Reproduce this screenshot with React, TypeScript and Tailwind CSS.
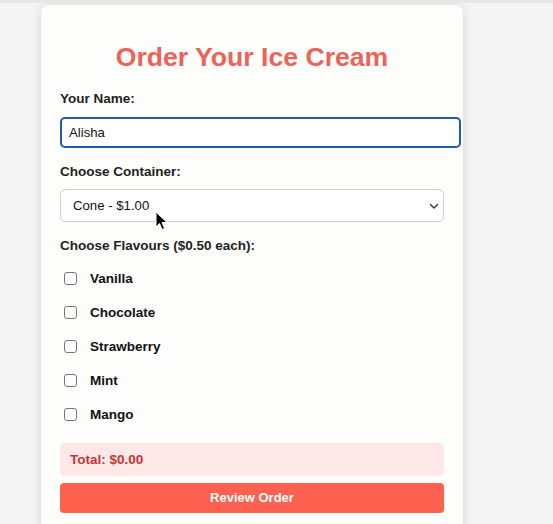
import React from "react";

const flavours = ["Vanilla", "Chocolate", "Strawberry", "Mint", "Mango"];

export default function App() {
  return (
    <div
      className="relative min-h-[524px] h-[524px] overflow-hidden bg-[#f4f4f4] border-t-[3px] border-[#e7e7e7]"
      style={{ fontFamily: '"Liberation Sans", Arial, sans-serif' }}
    >
      <div className="ml-[41px] mt-[2px] w-[422px] h-[560px] rounded-[8px] bg-[#fdfdfc] shadow-[0_0_10px_rgba(0,0,0,0.12)] px-[19px] pt-[19px]">
        <h1 className="mt-[18px] mb-[18px] text-center text-[26.6px] leading-[31px] font-bold text-[#ec6359]">
          Order Your Ice Cream
        </h1>
        <label className="block text-[13.5px] leading-[15px] font-bold text-[#1f1f1f] mb-[11px]">
          Your Name:
        </label>
        <div className="w-[401px] h-[31px] rounded-[5px] border-2 border-[#1f5bb5] bg-white flex items-center pl-[7px] text-[13.2px] text-[#111]">
          Alisha
        </div>
        <label className="block mt-[16px] text-[13.5px] leading-[15px] font-bold text-[#1f1f1f] mb-[10px]">
          Choose Container:
        </label>
        <div className="relative w-[384px] h-[33px] rounded-[5px] border border-[#cfcfcf] bg-white flex items-center pl-[12px] text-[13.2px] text-[#111]">
          Cone - $1.00
          <svg className="absolute right-[4px] top-[12px]" width="10" height="8" viewBox="0 0 10 8">
            <path d="M1.5 2.5 L5 6 L8.5 2.5" fill="none" stroke="#333" strokeWidth="1.4" strokeLinecap="round" strokeLinejoin="round" />
          </svg>
        </div>
        <label className="block mt-[16px] text-[13.5px] leading-[15px] font-bold text-[#1f1f1f] mb-[9px]">
          Choose Flavours ($0.50 each):
        </label>
        <div className="flex flex-col">
          {flavours.map((f) => (
            <div key={f} className="h-[34px] flex items-center">
              <span className="ml-[4px] w-[13px] h-[13px] rounded-[3px] border border-[#767676] bg-white -mt-[2px]" />
              <span className="ml-[13px] text-[13.5px] font-bold text-[#111]">{f}</span>
            </div>
          ))}
        </div>
        <div className="mt-[11px] h-[33px] w-[384px] rounded-[5px] bg-[#fde8e8] flex items-center pl-[10px] pt-[1px] text-[13.5px] font-bold text-[#c33536]">
          Total: $0.00
        </div>
        <div className="mt-[7px] h-[30px] w-[384px] rounded-[4px] bg-[#ff6151] flex items-center justify-center text-[13px] font-bold text-white">
          Review Order
        </div>
      </div>
      <svg className="absolute left-[155px] top-[208px]" width="13" height="20" viewBox="0 0 13 20">
        <path d="M1 1 L1 16 L4.5 12.5 L7 18.5 L9.5 17.5 L7 11.5 L12 11.5 Z" fill="#000" stroke="#fff" strokeWidth="1" strokeLinejoin="round" />
      </svg>
    </div>
  );
}
